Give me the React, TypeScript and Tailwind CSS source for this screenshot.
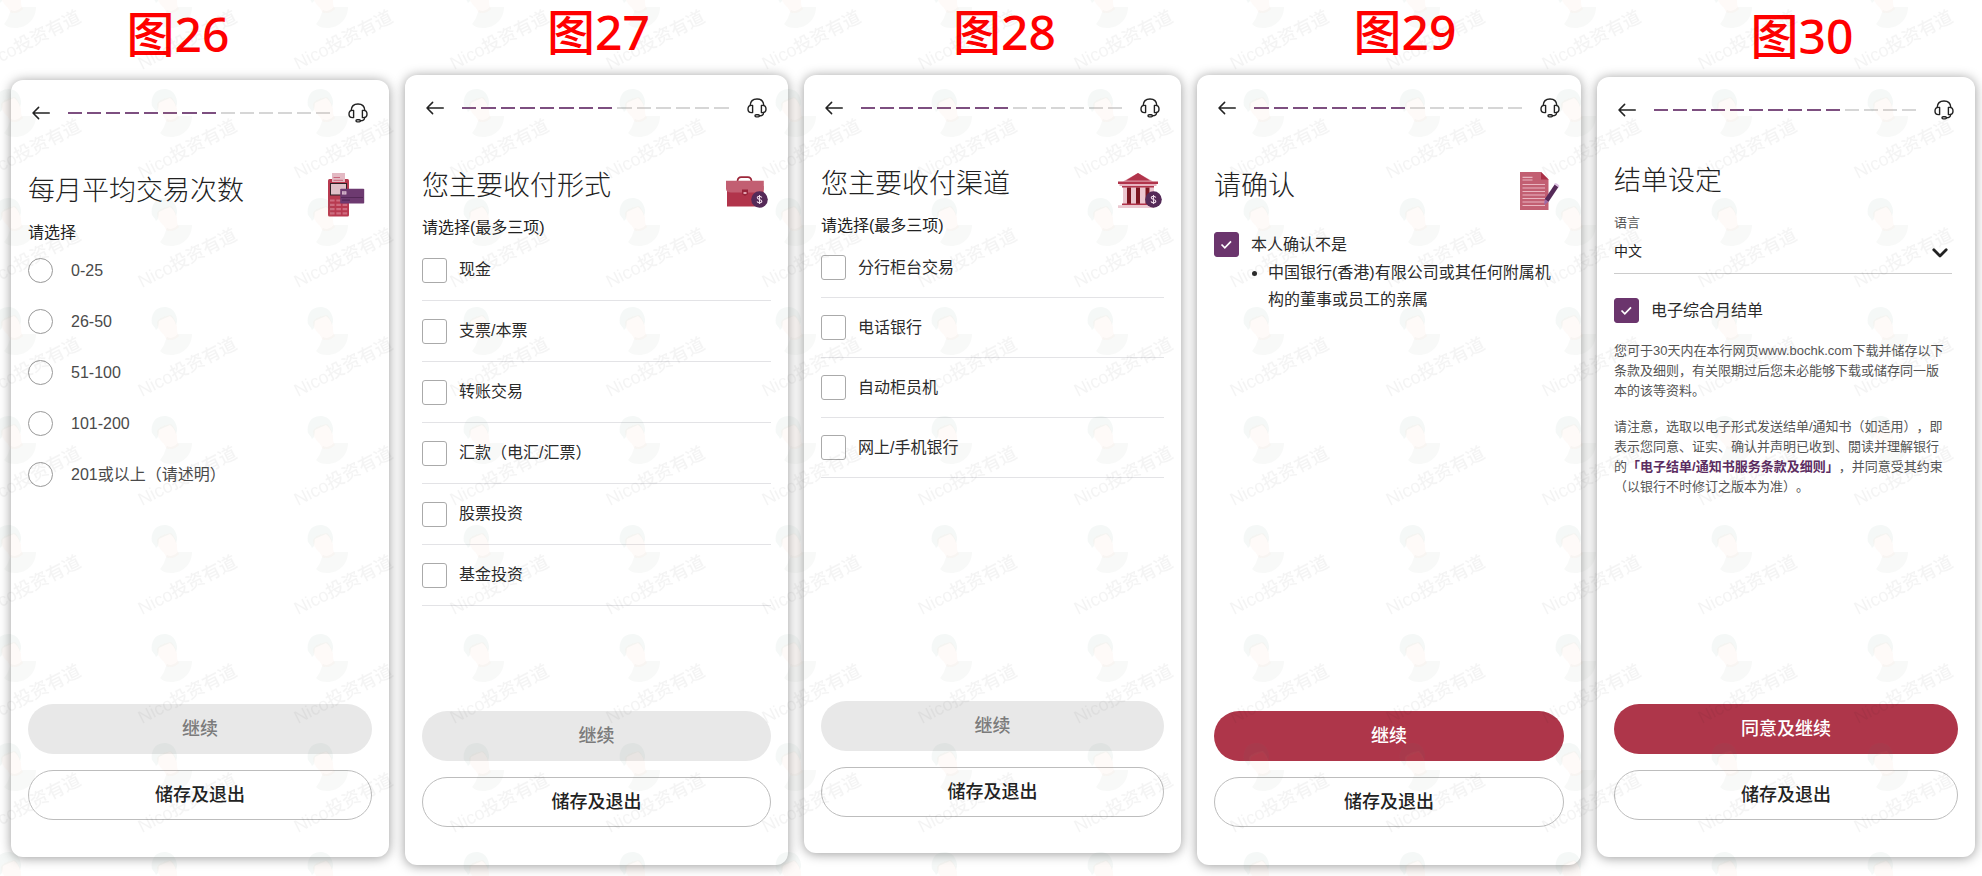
import React, { useState } from "react";

type ScreenProps = {
  figure: number;
  figureClass: string;
  cardClass: string;
  done: number;
  action: string;
  enabled?: boolean;
  children: React.ReactNode;
};

const TOTAL_STEPS = 14;

const frequencies = ["0-25", "26-50", "51-100", "101-200", "201或以上（请述明）"];
const paymentForms = ["现金", "支票/本票", "转账交易", "汇款（电汇/汇票）", "股票投资", "基金投资"];
const channels = ["分行柜台交易", "电话银行", "自动柜员机", "网上/手机银行"];

function BackIcon() {
  return (
    <svg className="w-[18px] h-5" viewBox="0 0 18 20" fill="none" stroke="#222" strokeWidth="1.5" strokeLinecap="round" strokeLinejoin="round">
      <path d="M17.3 10H1M6.6 4.4L1 10l5.6 5.6" />
    </svg>
  );
}

function HeadsetIcon() {
  return (
    <svg className="w-5 h-5" viewBox="0 0 20 20" fill="none" stroke="#222" strokeWidth="1.4" strokeLinecap="round" strokeLinejoin="round">
      <path d="M3.2 7.4C3.4 3.4 6.2 1 10 1s6.6 2.4 6.8 6.4" />
      <path d="M5.6 7.4v7.2H4.5C2.4 14.6 1 13 1 11s1.4-3.6 3.5-3.6z" />
      <path d="M14.4 7.4v7.2h1.1c2.1 0 3.5-1.6 3.5-3.6s-1.4-3.6-3.5-3.6z" />
      <path d="M16.6 14.4c0 2.4-1.6 3.4-4.2 3.4" />
      <rect x="8" y="16.7" width="4.4" height="2.2" rx="1.1" />
    </svg>
  );
}

function TerminalIcon() {
  return (
    <svg className="w-12 h-12 shrink-0" viewBox="0 0 48 48">
      <rect x="4" y="6" width="21" height="37.5" rx="1.5" fill="#b83a50" />
      <rect x="8" y="0" width="13" height="9" fill="#e3b9c3" />
      <path d="M9.5 4.5H16M9.5 7.3H19" stroke="#c2526a" strokeWidth="0.8" />
      <rect x="6.5" y="10.5" width="16" height="11.5" fill="#dfc0c8" stroke="#2d2227" strokeWidth="1" />
      <path d="M6 27.5h18M6 31.8h18M6 36.1h18M6 40.4h18" stroke="#cf6c80" strokeWidth="2.2" strokeDasharray="4.6 1.7" />
      <rect x="16.2" y="15.7" width="24" height="14.8" rx="0.8" fill="#6d3a70" />
      <path d="M17 24.5h22M18 27.2h8" stroke="#542857" strokeWidth="1.2" />
      <rect x="18" y="18.3" width="4.4" height="3.2" fill="#e2c6d4" />
      <path d="M20.2 18.3v3.2M18 19.9h4.4" stroke="#a77da6" strokeWidth="0.6" />
    </svg>
  );
}

function Coin({ x, y }: { x: number; y: number }) {
  return (
    <g transform={`translate(${x} ${y})`}>
      <circle r="8.3" fill="#552a58" />
      <path d="M2.2-1.9C1.9-3 1-3.3 0-3.3c-1.3 0-2.2.6-2.2 1.6C-2.2.5 2.3-.6 2.3 1.7 2.3 2.8 1.3 3.3 0 3.3S-2.1 2.8-2.4 1.8M0-4.5v9" fill="none" stroke="#f0dcea" strokeWidth="1.1" />
    </g>
  );
}

function BriefcaseIcon() {
  return (
    <svg className="w-12 h-12 shrink-0" viewBox="0 0 48 48">
      <path d="M14.5 13c.3-2.8 1.5-3.9 3.6-3.9h6.8c2.1 0 3.3 1.1 3.6 3.9" fill="none" stroke="#9c2639" strokeWidth="1.7" />
      <path d="M4 18h36.5v20.5H4z" fill="#b1344b" />
      <path d="M3 12.7h37.8v8.1c0 2.6-2 3.7-4.8 3.7H8c-3 0-5-1.2-5-3.7z" fill="#c25f72" />
      <path d="M19 21.5h6v4.6l-3 2-3-2z" fill="#98243a" />
      <path d="M20.5 24h3v2h-3z" fill="#e2a6b3" />
      <Coin x={36.5} y={31.5} />
    </svg>
  );
}

function BankIcon() {
  return (
    <svg className="w-12 h-12 shrink-0" viewBox="0 0 48 48">
      <path d="M22 7l15 8.5H7z" fill="#dc93a4" />
      <path d="M22 7l12 7.5H10z" fill="#b1344b" />
      <path d="M2 15.5h40V18H2z" fill="#b1344b" />
      <path d="M3.5 18h37v2h-37z" fill="#e6b4c0" />
      <path d="M7 20h31v19H7z" fill="#ecc6cf" />
      <path d="M6 20h32v1.5H6z" fill="#b1344b" />
      <path d="M11 21.5h4V38h-4zM20 21.5h4V38h-4zM29.5 21.5h4V38h-4z" fill="#7c1622" />
      <path d="M6 37.5h30v1.8H6z" fill="#b1344b" />
      <path d="M2 39.3h36V42H2z" fill="#ebc9d1" />
      <Coin x={37.5} y={33.5} />
    </svg>
  );
}

function DocumentIcon() {
  return (
    <svg className="w-12 h-12 shrink-0" viewBox="0 0 48 48">
      <path d="M4 4h21l7.5 7.5V42H4z" fill="#c25f72" />
      <path d="M25 4l7.5 7.5H25z" fill="#a92f46" />
      <path d="M6.5 9.3h10M6.5 12h10M6.5 16.5H29M6.5 20H29M6.5 23.5H29M6.5 27H29M6.5 30.5H29M6.5 34H29M6.5 37.5H29" stroke="#e9b6c1" strokeWidth="1.2" />
      <path d="M38.8 16.2l3.8 2.5-10 15-3.9-2.5z" fill="#552a58" />
      <path d="M38.8 16.2c.8-1.2 4.6 1.2 3.8 2.5z" fill="#dcbfe0" stroke="#dcbfe0" strokeWidth="1.2" />
      <path d="M28.7 31.2l3.9 2.5-4.4 3.3z" fill="#9c6aa6" />
    </svg>
  );
}

// Faint repeating portrait and name laid over the whole sheet
function Watermark() {
  return (
    <svg className="absolute inset-0 w-full h-full pointer-events-none" aria-hidden="true">
      <defs>
        <pattern id="mark" x="130" y="80" width="156" height="109" patternUnits="userSpaceOnUse">
          <path d="M30 53c2-3 4-5 5-9l2-5c3 2 7 1 11-3l14 0c0 12-9 21-21 21-4 0-8-1-11-4z" fill="#607060" fillOpacity="0.045" />
          <path d="M27 24c2-4 8-6 14-7 3 3 5 7 6 12 0 4 0 7 2 9-4 4-9 5-13 3-1-3-2-4-4-6-3-3-5-7-5-11z" fill="#f0a080" fillOpacity="0.05" />
          <path d="M22 26c-1-5 0-11 5-15 7-4 15-2 18 4 2 4 3 8 1 12-1-4-3-7-6-9-4 2-8 3-11 5l-1 7-2 2c-1-3-3-4-4-6z" fill="#508070" fillOpacity="0.055" />
        </pattern>
        <pattern id="name" x="130" y="0" width="156" height="109" patternUnits="userSpaceOnUse">
          <text transform="translate(12 70) rotate(-27)" fontSize="18" fontWeight="500" fill="#000" fillOpacity="0.045" className="font-['Liberation_Sans','Noto_Sans_CJK_SC',sans-serif]">
            Nico投资有道
          </text>
        </pattern>
      </defs>
      <rect width="100%" height="100%" fill="url(#name)" />
      <rect width="100%" height="100%" fill="url(#mark)" />
    </svg>
  );
}

function Tick({ label, checked, onChange }: { label: string; checked: boolean; onChange: () => void }) {
  return (
    <label className="flex items-center gap-3 text-base text-[#2b2b2b]">
      <span className="relative block w-[25px] h-[25px] shrink-0">
        <input
          type="checkbox"
          checked={checked}
          onChange={onChange}
          className="block appearance-none w-full h-full rounded-[3px] border border-[#aaa] bg-white checked:bg-[#6b356d] checked:border-[#6b356d]"
        />
        {checked && (
          <svg className="absolute inset-0 pointer-events-none" viewBox="0 0 25 25" fill="none" stroke="#fff" strokeWidth="1.7">
            <path d="M7.5 12.5l3.3 3.3 6.2-6.5" />
          </svg>
        )}
      </span>
      {label}
    </label>
  );
}

function CheckList({ items, rowClass }: { items: string[]; rowClass: string }) {
  const [picked, setPicked] = useState<string[]>([]);

  function toggle(item: string) {
    setPicked(picked.includes(item) ? picked.filter(p => p !== item) : [...picked, item]);
  }

  return (
    <ul>
      {items.map(item => (
        <li key={item} className={`flex items-center border-b border-[#e3e3e6] ${rowClass}`}>
          <Tick label={item} checked={picked.includes(item)} onChange={() => toggle(item)} />
        </li>
      ))}
    </ul>
  );
}

function Heading({ title, hint, icon }: { title: string; hint?: string; icon?: React.ReactNode }) {
  return (
    <div className="flex items-start justify-between">
      <div>
        <h2 className="text-[27px] leading-9 font-light text-[#222]">{title}</h2>
        {hint && <p className="mt-3 text-base leading-6 text-[#222]">{hint}</p>}
      </div>
      {icon}
    </div>
  );
}

function Screen({ figure, figureClass, cardClass, done, action, enabled, children }: ScreenProps) {
  return (
    <section className="flex flex-col">
      <h1 className={`text-center text-[48px] leading-[60px] font-medium text-[#ff0000] font-['Noto_Sans','Noto_Sans_CJK_SC',sans-serif] ${figureClass}`}>
        图{figure}
      </h1>
      <div className={`flex-1 flex flex-col rounded-xl bg-white px-[17px] pt-[23px] shadow-[0_1px_12px_rgba(0,0,0,0.4)] ${cardClass}`}>
        <header className="flex items-center px-1">
          <button type="button" aria-label="返回"><BackIcon /></button>
          <div className="flex-1 flex gap-[5px] mx-[18px]">
            {Array.from({ length: TOTAL_STEPS }, (_, i) => (
              <span key={i} className={`flex-1 h-0.5 ${i < done ? "bg-[#7d4f80]" : "bg-[#d6d6d6]"}`} />
            ))}
          </div>
          <button type="button" aria-label="客服"><HeadsetIcon /></button>
        </header>
        {children}
        <div className="mt-auto flex flex-col gap-4 text-lg font-medium">
          <button
            type="button"
            disabled={!enabled}
            className="h-[50px] rounded-full bg-[#ae364a] text-white disabled:bg-[#e8e8e8] disabled:text-[#7b7b7b]"
          >
            {action}
          </button>
          <button type="button" className="h-[50px] rounded-full border border-[#bdbdbd] text-[#222]">
            储存及退出
          </button>
        </div>
      </div>
    </section>
  );
}

export default function App() {
  const [frequency, setFrequency] = useState("");
  const [notRelated, setNotRelated] = useState(true);
  const [eStatement, setEStatement] = useState(true);
  const [language, setLanguage] = useState("中文");

  return (
    <main className="relative min-h-screen grid grid-cols-[378fr_383fr_377fr_384fr_378fr] gap-4 pl-[11px] pr-[7px] bg-white [text-spacing-trim:space-all] font-['Liberation_Sans','Noto_Sans_CJK_SC',sans-serif]">
      <Screen figure={26} figureClass="pr-11 pt-1 mb-4" cardClass="mb-[19px] pb-[37px]" done={8} action="继续">
        <div className="mt-[50px]">
          <Heading title="每月平均交易次数" hint="请选择" icon={<TerminalIcon />} />
        </div>
        <div>
          {frequencies.map(f => (
            <label key={f} className="flex items-center gap-[18px] h-[51px] text-base text-[#4a4a4a]">
              <input
                type="radio"
                name="frequency"
                checked={frequency === f}
                onChange={() => setFrequency(f)}
                className="appearance-none w-[25px] h-[25px] rounded-full border border-[#999] checked:border-8 checked:border-[#6b356d]"
              />
              {f}
            </label>
          ))}
        </div>
      </Screen>

      <Screen figure={27} figureClass="pl-1 pt-0.5 mb-[13px]" cardClass="mb-[11px] pb-[38px]" done={8} action="继续">
        <div className="mt-[50px]">
          <Heading title="您主要收付形式" hint="请选择(最多三项)" icon={<BriefcaseIcon />} />
          <CheckList items={paymentForms} rowClass="h-[61px]" />
        </div>
      </Screen>

      <Screen figure={28} figureClass="pl-6 pt-0.5 mb-[13px]" cardClass="mb-[23px] pb-9" done={8} action="继续">
        <div className="mt-12">
          <Heading title="您主要收付渠道" hint="请选择(最多三项)" icon={<BankIcon />} />
          <CheckList items={channels} rowClass="h-[60px]" />
        </div>
      </Screen>

      <Screen figure={29} figureClass="pl-8 pt-0.5 mb-[13px]" cardClass="mb-[11px] pb-[38px]" done={8} action="继续" enabled={notRelated}>
        <div className="mt-[50px]">
          <Heading title="请确认" icon={<DocumentIcon />} />
        </div>
        <div className="mt-4">
          <Tick label="本人确认不是" checked={notRelated} onChange={() => setNotRelated(!notRelated)} />
          <ul className="mt-0.5 pl-[54px] list-disc text-base leading-[27px] text-[#2b2b2b]">
            <li>中国银行(香港)有限公司或其任何附属机构的董事或员工的亲属</li>
          </ul>
        </div>
      </Screen>

      <Screen figure={30} figureClass="pl-8 pt-1.5 mb-[11px]" cardClass="mb-[19px] pb-[37px]" done={10} action="同意及继续" enabled={eStatement}>
        <div className="mt-[43px]">
          <Heading title="结单设定" />
        </div>
        <div className="relative mt-3.5 mr-1.5 border-b border-[#ccc]">
          <label htmlFor="language" className="block text-[13px] leading-5 text-[#555]">语言</label>
          <select
            id="language"
            value={language}
            onChange={e => setLanguage(e.target.value)}
            className="block appearance-none w-full h-10 pb-1 text-sm text-[#222] bg-transparent"
          >
            <option>中文</option>
            <option>English</option>
          </select>
          <svg className="absolute right-1 bottom-3 w-4 h-4 pointer-events-none" viewBox="0 0 16 16" fill="none" stroke="#222" strokeWidth="2.8" strokeLinecap="round" strokeLinejoin="round">
            <path d="M1.8 4.8L8 11l6.2-6.2" />
          </svg>
        </div>
        <div className="mt-6">
          <Tick label="电子综合月结单" checked={eStatement} onChange={() => setEStatement(!eStatement)} />
        </div>
        <div className="mt-[18px] pr-3 flex flex-col gap-4 text-[13px] leading-5 text-[#555]">
          <p>您可于30天内在本行网页www.bochk.com下载并储存以下条款及细则，有关限期过后您未必能够下载或储存同一版本的该等资料。</p>
          <p>
            请注意，选取以电子形式发送结单/通知书（如适用），即表示您同意、证实、确认并声明已收到、閲读并理解银行的<a href="#terms" className="font-bold text-[#5c2d62]">「电子结单/通知书服务条款及细则」</a>，并同意受其约束（以银行不时修订之版本为准）。
          </p>
        </div>
      </Screen>
      <Watermark />
    </main>
  );
}
